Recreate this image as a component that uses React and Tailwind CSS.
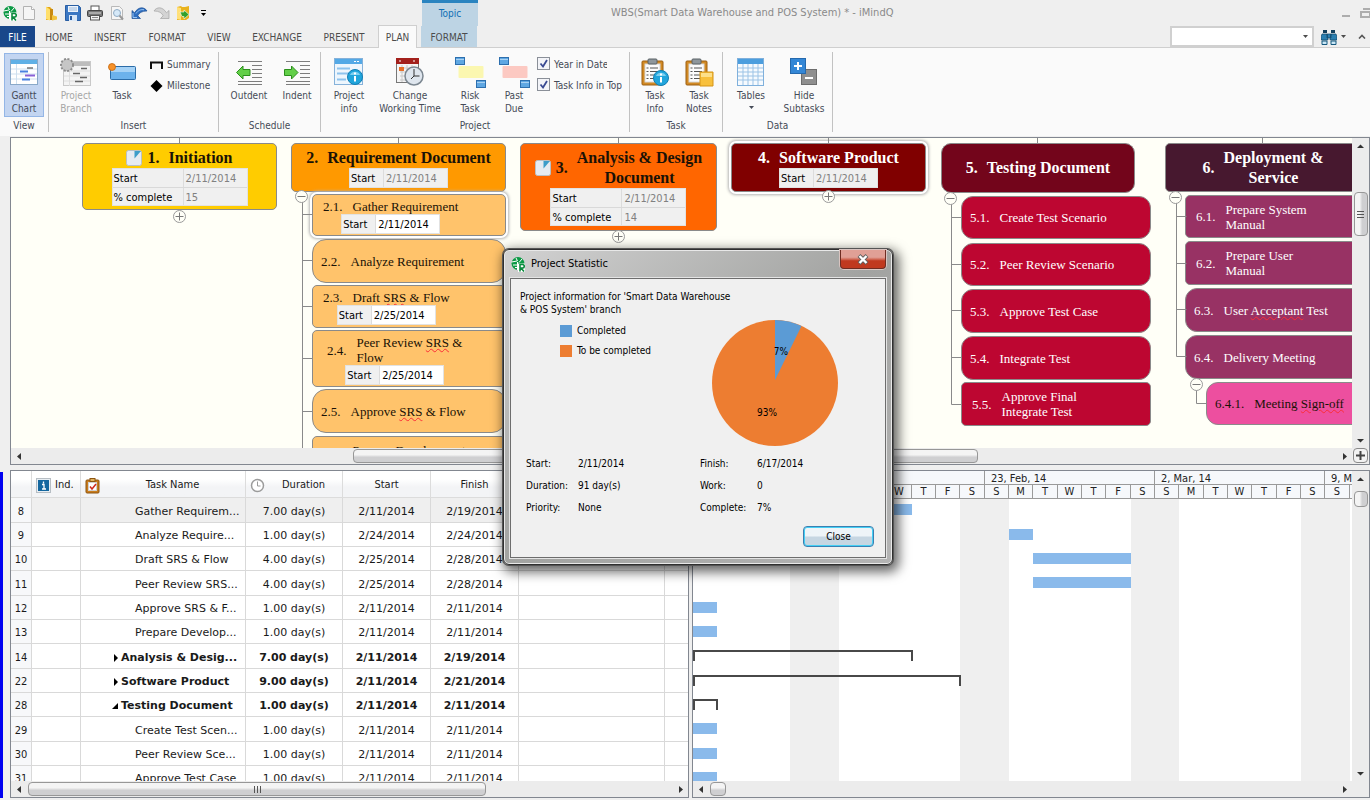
import React from "react";

/* ---------- small drawings ---------- */

const Svg = ({ w, h, children, className = "" }) => (
  <svg width={w} height={h} viewBox={`0 0 ${w} ${h}`} className={`block shrink-0 ${className}`} aria-hidden="true">
    {children}
  </svg>
);

const Logo = () => (
  <Svg w={14} h={16}>
    <circle cx="7" cy="7.500" r="6.500" fill="#0d9a46" />
    <path d="M.5 6 6 5M2 9h4.500M4 11.500h2.500M6.500 5 5 2M8 6.500 11 3M6.500 6v8" stroke="#fff" strokeWidth="1" fill="none" />
    <path d="M7 7.500h7V16H7z" fill="#fff" />
    <path d="M9 15.500V8.500h2.500a1.500 1.500 0 0 1 0 3.500H10l3 3.500" fill="none" stroke="#0b8a3e" strokeWidth="1.600" />
  </Svg>
);
const NewDoc = () => (
  <Svg w={14} h={16}>
    <path d="M1.500 1.500h8l3 3v10h-11z" fill="#f5f5f5" stroke="#b2b2b2" />
    <path d="M9.500 1.500v3h3" fill="#fff" stroke="#b2b2b2" />
  </Svg>
);
const Folder = () => (
  <Svg w={14} h={16}>
    <path d="M2 2h4l3 3v10H2z" fill="#e3a61a" />
    <path d="M6 4h3v11H6z" fill="#c98a10" />
    <path d="M2 1.500l4 3v11L2 14z" fill="#ffdf6b" />
    <path d="M8 10l5 1.500v3L8 15.500z" fill="#f3c33d" />
  </Svg>
);
const Save = () => (
  <Svg w={16} h={16}>
    <path d="M.5.5h13l2 2v13H.5z" fill="#3c78c3" stroke="#2a5ea3" />
    <rect x="3" y="1" width="10" height="6" fill="#eef4fb" />
    <path d="M4 3h8M4 5h8" stroke="#9bb9dc" />
    <rect x="4" y="10" width="8" height="6" fill="#dbe8f7" />
    <rect x="5" y="11" width="2" height="4" fill="#2a5ea3" />
  </Svg>
);
const Printer = () => (
  <Svg w={16} h={16}>
    <rect x="4" y="1" width="8" height="5" fill="#fff" stroke="#555" />
    <rect x=".5" y="5.500" width="15" height="6" rx="1" fill="#777" stroke="#444" />
    <path d="M2 8h12" stroke="#ddd" />
    <rect x="3.500" y="10.500" width="9" height="4.500" fill="#f2f2f2" stroke="#555" />
    <path d="M5 12.500h6" stroke="#888" />
  </Svg>
);
const Preview = () => (
  <Svg w={14} h={16}>
    <path d="M1.500 1.500h8l3 3v10h-11z" fill="#f6f6f6" stroke="#b9b9b9" />
    <circle cx="7" cy="8" r="3.500" fill="#d6e9f8" stroke="#8fabc4" />
    <path d="M9.500 10.500l3.500 4" stroke="#999" strokeWidth="2" />
  </Svg>
);
const Undo = () => (
  <Svg w={17} h={14}>
    <path d="M1 4.500V12.500h8.500L6.800 9.800C8 6.800 11 5 16 5 13.500.8 7.500.2 3.500 6.800z" fill="#2f6fc0" stroke="#1d4f93" strokeWidth=".7" />
    <path d="M2 7v4.500h4M5 7.500C7 4.500 10 3 13 3.800" fill="none" stroke="#9cc6f3" />
  </Svg>
);
const Redo = () => (
  <Svg w={17} h={14}>
    <path d="M16 4.500V12.500H7.500l2.700-2.700C9 6.800 6 5 1 5 3.500.8 9.500.2 13.500 6.800z" fill="#d4d4d4" stroke="#a3a3a3" strokeWidth=".7" />
  </Svg>
);
const OpenMap = () => (
  <Svg w={14} h={16}>
    <path d="M1 2l4-1 1 1h3l4-1v12l-3 2H1z" fill="#e9b21c" />
    <path d="M1 2l4 1v12l-4-1z" fill="#ffe07a" />
    <path d="M4 7h4V5l5 4.500L8 14v-2.500H6z" fill="#33a02c" stroke="#fff" strokeWidth=".6" />
  </Svg>
);
const Caret = ({ className = "" }) => (
  <Svg w={5} h={3} className={className}>
    <path d="M0 0h5L2.500 3z" fill="currentColor" />
  </Svg>
);

const GanttIcon = () => (
  <Svg w={28} h={26}>
    <rect x=".5" y=".5" width="27" height="25" fill="#fff" stroke="#8aa9c9" />
    <rect x="1" y="1" width="26" height="4" fill="#5fb0e6" />
    <path d="M1 10h26M1 15h26M1 20h26M6.500 5v20" stroke="#cfe0ef" />
    <path d="M17 9h6" stroke="#333" strokeWidth="1" />
    <path d="M10 12.500h8M12 20.500h8" stroke="#4b82e0" strokeWidth="2" />
    <path d="M15 16.500h10" stroke="#8a62d6" strokeWidth="2" />
  </Svg>
);
const BranchIcon = () => (
  <Svg w={32} h={30}>
    <g transform="translate(3 4)">
      <rect x=".5" y=".5" width="27" height="24" fill="#f4f4f4" stroke="#c9c9c9" />
      <rect x="1" y="1" width="26" height="4" fill="#bdbdbd" />
      <path d="M1 10h26M1 15h26M1 20h26M6.500 5v20" stroke="#dedede" />
      <path d="M18 7.500h6M10 12.500h7M12 20.500h8M17 16.500h7" stroke="#666" strokeWidth="1.500" />
    </g>
    <circle cx="7" cy="8" r="6" fill="#bcbcbc" stroke="#8d8d8d" strokeWidth="2" strokeDasharray="2 1.500" />
    <circle cx="7" cy="8" r="5" fill="#c6c6c6" />
  </Svg>
);
const TaskIcon = () => (
  <Svg w={28} h={18}>
    <rect x="2.500" y="3.500" width="25" height="13" rx="1" fill="#6cb2ec" stroke="#2b6ca8" />
    <rect x="3" y="4" width="24" height="5" fill="#a5d2f6" />
    <circle cx="4" cy="4" r="3.500" fill="#f7922a" stroke="#c4640b" strokeWidth=".8" />
  </Svg>
);
const DentIcon = ({ out }) => (
  <Svg w={27} h={27}>
    <path d="M2 2.500h24M16 6.500h10M16 10.500h10M16 14.500h10M16 18.500h10M2 22.500h24M2 25.500h24" stroke="#7d7d7d" />
    {out ? (
      <path d="M.5 13.500 7 7v3.500h7v6H7V20z" fill="#62cf48" stroke="#2c8f1c" />
    ) : (
      <path d="M14 13.500 7.500 7v3.500h-7v6h7V20z" fill="#62cf48" stroke="#2c8f1c" />
    )}
  </Svg>
);
const InfoDot = ({ x, y, r }) => (
  <g>
    <circle cx={x} cy={y} r={r} fill="#21a5dc" stroke="#117fb4" />
    <path d={`M${x - 5} ${y - 2}a5.500 5.500 0 0 1 10 0`} fill="#7fd0f0" />
    <path d={`M${x} ${y - 4.5}v2M${x} ${y - 1}v5.500`} stroke="#fff" strokeWidth="2" />
  </g>
);
const ProjectInfoIcon = () => (
  <Svg w={30} h={28}>
    <rect x=".5" y=".5" width="28" height="26" fill="#eef6fd" stroke="#86b2da" />
    <rect x="1" y="1" width="27" height="5" fill="#54a9e6" />
    <path d="M20 3.500h2M23 3.500h2" stroke="#fff" />
    <path d="M3 10.500h13M3 15.500h12M3 21.500h9" stroke="#8ec3ee" strokeWidth="2" />
    <InfoDot x={21} y={19} r={7.5} />
  </Svg>
);
const WorkingTimeIcon = () => (
  <Svg w={28} h={28}>
    <rect x=".5" y=".5" width="22" height="24" fill="#f5f5f5" stroke="#777" />
    <rect x="0" y="0" width="23" height="6" fill="#a3201c" />
    <path d="M4 2v2M18 2v2" stroke="#fff" />
    <path d="M4 10h14M4 14h14M4 18h14M4 22h14M6 7v17M11 7v17M16 7v17" stroke="#c9c9c9" />
    <rect x="3" y="9" width="5" height="4" fill="#e8702a" />
    <circle cx="18" cy="18" r="9" fill="#dfe6ee" stroke="#7c8791" strokeWidth="1.500" />
    <path d="M18 11v7h5.500M18 18l-3 3" stroke="#333" fill="none" />
  </Svg>
);
const PairIcon = ({ fill }) => (
  <Svg w={32} h={32}>
    <rect x="1.500" y="1.500" width="9" height="7" fill="#5fa7e2" stroke="#2d6fae" />
    <rect x="4.500" y="10" width="25" height="12" rx="1" fill={fill} />
    <rect x="22.500" y="24.500" width="9" height="7" fill="#5fa7e2" stroke="#2d6fae" />
    <path d="M2 3.500h8M23 26.500h8" stroke="#a9d1f2" />
  </Svg>
);
const Clipboard = ({ children }) => (
  <Svg w={29} h={29}>
    <rect x="1" y="3" width="21" height="24" rx="1" fill="#d28a24" stroke="#9c5f10" />
    <rect x="4" y="6" width="15" height="18" fill="#fcfcfc" stroke="#d8d8d8" />
    <rect x="7" y="1" width="9" height="5" rx="1" fill="#8f979c" stroke="#5b6266" />
    <path d="M5.500 10h2M9 10h8M5.500 13.500h2M9 13.500h8M5.500 17h2M9 17h8M5.500 20.500h2M9 20.500h6" stroke="#555" />
    {children}
  </Svg>
);
const TablesIcon = () => (
  <Svg w={28} h={28}>
    <rect x=".5" y=".5" width="26" height="27" fill="#f6fafe" stroke="#7fb0dc" />
    <rect x="1" y="1" width="25" height="5" fill="#4c9ede" />
    <path d="M1 10h25M1 14h25M1 18h25M1 22h25M6 6v21M11 6v21M16 6v21M21 6v21" stroke="#9cc3e6" />
  </Svg>
);
const HideIcon = () => (
  <Svg w={28} h={28}>
    <rect x="11.500" y="11.500" width="15" height="15" fill="#8f8f8f" stroke="#6d6d6d" />
    <rect x=".5" y=".5" width="15" height="15" fill="#3487d6" stroke="#2569ad" />
    <path d="M8 4v8M4 8h8" stroke="#fff" strokeWidth="2" />
    <path d="M15 20h8" stroke="#fff" strokeWidth="2" />
  </Svg>
);
const Binoculars = () => (
  <Svg w={16} h={16}>
    <path d="M2 1h4v3H2zM10 1h4v3h-4z" fill="#123f5c" />
    <path d="M1 5h5l1 5v1H0V8zM10 5h5l1 3v3H9v-1zM6 5h4v4H6z" fill="#2b7fb0" stroke="#0f4667" strokeWidth=".7" />
    <path d="M1 12h5v3.500H1zM10 12h5v3.500h-5z" fill="#c9e6f5" stroke="#15587f" />
  </Svg>
);

/* ---------- title bar, tabs ---------- */

const quick = [
  ["New", NewDoc],
  ["Open", Folder],
  ["Save", Save],
  ["Print", Printer],
  ["Preview", Preview],
  ["Undo", Undo],
  ["Redo", Redo],
  ["Open map", OpenMap],
];

const tabs = [
  ["HOME", "w-12"],
  ["INSERT", "w-[54px]"],
  ["FORMAT", "w-[60px]"],
  ["VIEW", "w-[44px]"],
  ["EXCHANGE", "w-[72px]"],
  ["PRESENT", "w-[62px]"],
];

function Header() {
  return (
    <header className="shrink-0 bg-[#efefef] text-[#4c4c4c]">
      <div className="flex h-[26px]">
        <div className="flex w-[422px] shrink-0 items-center">
          <span className="flex w-[18px] justify-end pr-px"><Logo /></span>
          {quick.map(([name, Icon]) => (
            <button key={name} aria-label={name} className="flex w-[22px] justify-center"><Icon /></button>
          ))}
          <button aria-label="Customize" className="flex w-3 flex-col items-end gap-0.5 text-black">
            <span className="h-px w-[5px] bg-black" />
            <Caret />
          </button>
        </div>
        <div className="w-14 shrink-0 border-t-[3px] border-[#2a84c0] bg-[#bdd4e4] pt-[3px] text-center leading-[15px] text-[#0f6fb5]">Topic</div>
        <h1 className="min-w-0 flex-1 truncate pl-[133px] text-[11px] leading-[26px] text-[#8a8a8a]">
          WBS(Smart Data Warehouse and POS System) * - iMindQ
        </h1>
        <div className="flex shrink-0 items-center gap-2.5 overflow-hidden text-[#adadad]">
          <button aria-label="Minimize" className="mt-1.5 h-0.5 w-2 bg-[#adadad]" />
          <button aria-label="Restore" className="-mr-0.5">
            <Svg w={12} h={10}>
              <path d="M3 1h9v6M1 4h9v5H1z" fill="none" stroke="#adadad" strokeWidth="2" />
            </Svg>
          </button>
        </div>
      </div>
      <nav className="flex h-[22px] items-stretch border-b border-[#cfcfcf]">
        <button className="w-[35px] bg-[#19478a] pt-0.5 text-white">FILE</button>
        {tabs.map(([t, w]) => (
          <button key={t} className={`pt-0.5 ${w}`}>{t}</button>
        ))}
        <button className="z-10 -mt-px -mb-px ml-[3px] mr-1 w-[39px] border border-b-0 border-[#cfcfcf] bg-[#fafafa] pt-px">PLAN</button>
        <button className="w-14 bg-[#bdd4e4] pt-0.5">FORMAT</button>
        <div className="ml-auto flex items-center pr-1">
          <label className="flex h-[21px] w-36 items-center border-2 border-[#d0d0d0] bg-white pr-1">
            <input aria-label="Search" className="min-w-0 flex-1 bg-transparent px-1 outline-none" />
            <Caret />
          </label>
          <button aria-label="Find" className="ml-[7px] flex items-center gap-1"><Binoculars /><Caret /></button>
          <button aria-label="Collapse ribbon" className="ml-3">
            <Svg w={8} h={5}><path d="M1 4.500 4 1.500l3 3" fill="none" stroke="#555" strokeWidth="1.600" /></Svg>
          </button>
        </div>
      </nav>
    </header>
  );
}

/* ---------- ribbon ---------- */

const Big = ({ icon, a, b, w, className = "", caret }) => (
  <button className={`flex h-16 shrink-0 flex-col items-center leading-[13px] ${w} ${className}`}>
    <span className="flex h-9 items-center pt-0.5">{icon}</span>
    <span>{a}</span>
    {caret ? <Caret className="mt-1" /> : <span>{b}</span>}
  </button>
);

const Group = ({ label, w, children }) => (
  <section className={`my-1 flex shrink-0 flex-col border-r border-[#c2c2c2] ${w}`}>
    <div className="flex pt-px">{children}</div>
    <h2 className="mt-auto text-center leading-[13px]">{label}</h2>
  </section>
);

const Check = ({ children, max }) => (
  <label className={`flex h-[21px] items-center gap-1 overflow-hidden whitespace-nowrap ${max}`}>
    <input type="checkbox" defaultChecked className="peer sr-only" />
    <span className="flex h-[13px] w-[13px] shrink-0 items-center justify-center border border-[#8a8f98] bg-[#f3f4f8]">
      <Svg w={9} h={9}><path d="M1.500 4.500 4 7.500 8 1" fill="none" stroke="#3a4a92" strokeWidth="1.800" /></Svg>
    </span>
    <span className="pt-0.5">{children}</span>
  </label>
);

function Ribbon() {
  return (
    <div className="flex h-[88px] shrink-0 bg-[#fafafa] text-[#454b57]">
      <Group label="View" w="w-[49px]">
        <Big w="w-10" className="ml-1 bg-[#c3d5f1] outline outline-1 -outline-offset-1 outline-[#94b6e6]" icon={<GanttIcon />} a="Gantt" b="Chart" />
      </Group>
      <Group label="Insert" w="w-[170px]">
        <Big w="w-11" className="ml-[5px] text-[#a6a6a6]" icon={<BranchIcon />} a="Project" b="Branch" />
        <Big w="w-12" icon={<TaskIcon />} a="Task" />
        <div className="ml-1 flex flex-col pt-px">
          <button className="flex h-[21px] items-center gap-1">
            <Svg w={13} h={8}><path d="M1 8V1.500h11V8" fill="none" stroke="#111" strokeWidth="2" /></Svg>
            Summary
          </button>
          <button className="flex h-[21px] items-center gap-1">
            <Svg w={13} h={12}><path d="M6.500 0 12.500 6l-6 6L.5 6z" fill="#000" /></Svg>
            Milestone
          </button>
        </div>
      </Group>
      <Group label="Schedule" w="w-[102px]">
        <Big w="w-12" className="ml-1.5" icon={<DentIcon out />} a="Outdent" />
        <Big w="w-12" icon={<DentIcon />} a="Indent" />
      </Group>
      <Group label="Project" w="w-[309px]">
        <Big w="w-[50px]" className="ml-[3px]" icon={<ProjectInfoIcon />} a="Project" b="info" />
        <Big w="w-[72px]" icon={<WorkingTimeIcon />} a="Change" b="Working Time" />
        <Big w="w-12" icon={<PairIcon fill="#fbf7b0" />} a="Risk" b="Task" />
        <Big w="w-10" icon={<PairIcon fill="#fcc9c2" />} a="Past" b="Due" />
        <div className="ml-[3px] flex flex-col">
          <Check max="max-w-[70px]">Year in Date</Check>
          <Check max="max-w-[88px]">Task Info in Top</Check>
        </div>
      </Group>
      <Group label="Task" w="w-[93px]">
        <Big w="w-11" className="ml-[3px]" icon={<Clipboard><InfoDot x={20} y={20} r={7.5} /></Clipboard>} a="Task" b="Info" />
        <Big w="w-11" icon={<Clipboard><path d="M15 14h13v14H15z" fill="#f8c03c" stroke="#d59416" /><path d="M16 15h11v4H16z" fill="#fde08a" /></Clipboard>} a="Task" b="Notes" />
      </Group>
      <Group label="Data" w="w-[110px]">
        <Big w="w-[54px]" className="ml-px" icon={<TablesIcon />} a="Tables" caret />
        <Big w="w-[52px]" icon={<HideIcon />} a="Hide" b="Subtasks" />
      </Group>
    </div>
  );
}

/* ---------- scroll bars ---------- */

const Arrow = ({ dir }) => {
  const d = { left: "M6 1v7L2 4.500z", right: "M3 1v7l4-3.500z", up: "M1 6h7L4.500 2.500z", down: "M1 3h7L4.500 6.500z" }[dir];
  return (
    <button aria-label={`Scroll ${dir}`} className="flex h-4 w-4 shrink-0 items-center justify-center">
      <Svg w={9} h={9}><path d={d} fill="#333" /></Svg>
    </button>
  );
};
const Grip = ({ upright }) => (
  <span className={`flex gap-0.5 ${upright ? "flex-col" : ""}`}>
    {[0, 1, 2].map((i) => (
      <span key={i} className={upright ? "h-px w-[7px] bg-[#555]" : "h-[7px] w-px bg-[#555]"} />
    ))}
  </span>
);
const HBar = ({ thumb, grip }) => (
  <div className="flex h-4 min-w-0 flex-1 items-center bg-[#ececec]">
    <Arrow dir="left" />
    <div className="flex min-w-0 flex-1">
      <div className={`flex h-[14px] items-center justify-center rounded-sm border border-[#979797] bg-linear-to-b from-[#f4f4f4] from-40% to-[#cfcfd1] to-60% ${thumb}`}>{grip && <Grip />}</div>
    </div>
    <Arrow dir="right" />
  </div>
);
const VBar = ({ thumb, grip }) => (
  <div className="flex min-h-0 w-[17px] flex-1 flex-col items-center bg-[#ececec]">
    <Arrow dir="up" />
    <div className="flex min-h-0 w-full flex-1 flex-col items-center">
      <div className={`flex w-[14px] items-center justify-center rounded-sm border border-[#979797] bg-linear-to-r from-[#f4f4f4] from-40% to-[#cfcfd1] to-60% ${thumb}`}>{grip && <Grip upright />}</div>
    </div>
    <Arrow dir="down" />
  </div>
);

/* ---------- mind map ---------- */

const PieMark = () => (
  <Svg w={16} h={16}>
    <rect x=".5" y=".5" width="15" height="15" rx="2" fill="#e6ebf1" stroke="#b9c0c6" />
    <path d="M8.500 1H15L8.500 8.500z" fill="#3d9dc9" />
  </Svg>
);

const Fields = ({ rows, dim }) => (
  <dl className="border border-[#e2e2e2] bg-[#f0f0f0] [font-family:'DejaVu_Sans_Condensed','DejaVu_Sans',sans-serif] text-[11px] font-normal">
    {rows.map(([k, v], i) => (
      <div key={k} className={`flex h-[18px] leading-[19px] ${i ? "border-t border-[#d9d9d9]" : ""}`}>
        <dt className={`border-r border-[#dcdcdc] pl-px text-black ${rows.length > 1 ? "w-[71px]" : "w-[34px]"}`}>{k}</dt>
        <dd className={`w-[63px] pl-0.5 ${dim ? "text-[#808080]" : "bg-white text-black"}`}>{v}</dd>
      </div>
    ))}
  </dl>
);

const Bad = ({ children }) => (
  <span className="underline decoration-red-500 decoration-wavy decoration-1 underline-offset-1">{children}</span>
);

const start = (d) => [["Start", d]];
const main = "text-[16px] font-bold leading-5";
const frame = "shadow-[0_0_0_2px_#fff,0_0_3px_3px_#b4b4b4]";

const nodes = [
  { box: "left-[71px] top-[5px] h-[67px] w-[195px]", look: "rounded-[5px] bg-[#ffcc00] text-[#1a1206]", main: 1, n: "1.", icon: 1, text: "Initiation", f: [["Start", "2/11/2014"], ["% complete", "15"]] },
  { box: "left-[280px] top-[5px] h-[49px] w-[215px]", look: "rounded-[5px] bg-[#ff9900] text-[#1a1206]", main: 1, n: "2.", text: "Requirement Document", f: start("2/11/2014") },
  { box: "left-[509px] top-[5px] h-[88px] w-[197px]", look: "rounded-[5px] bg-[#ff6600] text-[#1a1206]", main: 1, n: "3.", icon: 1, text: <>Analysis &amp; Design<br />Document</>, f: [["Start", "2/11/2014"], ["% complete", "14"]] },
  { box: "left-[720px] top-[5px] h-[49px] w-[195px]", look: `rounded-[5px] bg-[#800000] text-white ${frame}`, main: 1, n: "4.", text: "Software Product", f: start("2/11/2014") },
  { box: "left-[930px] top-[5px] h-[50px] w-[194px]", look: "rounded-[10px] bg-[#73051b] text-white", main: 1, n: "5.", text: "Testing Document" },
  { box: "left-[1154px] top-[5px] h-[49px] w-[196px]", look: "rounded-[5px] bg-[#47182f] text-white", main: 1, n: "6.", text: <>Deployment &amp;<br />Service</> },

  { box: "left-[301px] top-[56px] h-[42px] w-[194px]", look: `rounded-[5px] bg-[#ffc36b] pl-2.5 text-[#1a1206] ${frame}`, n: "2.1.", text: "Gather Requirement", f: start("2/11/2014") },
  { box: "left-[301px] top-[101px] h-[44px] w-[194px]", look: "rounded-[14px] bg-[#ffc36b] pl-2 text-[#1a1206]", n: "2.2.", text: "Analyze Requirement" },
  { box: "left-[301px] top-[147px] h-[43px] w-[194px]", look: "rounded-[5px] bg-[#ffc36b] pl-2.5 text-[#1a1206]", n: "2.3.", text: <>Draft <Bad>SRS</Bad> &amp; Flow</>, f: start("2/25/2014") },
  { box: "left-[301px] top-[192px] h-[57px] w-[194px]", look: "rounded-[5px] bg-[#ffc36b] pl-3.5 text-[#1a1206]", n: "2.4.", text: <>Peer Review <Bad>SRS</Bad> &amp;<br />Flow</>, f: start("2/25/2014") },
  { box: "left-[301px] top-[251px] h-[44px] w-[194px]", look: "rounded-[14px] bg-[#ffc36b] pl-2 text-[#1a1206]", n: "2.5.", text: <>Approve <Bad>SRS</Bad> &amp; Flow</> },
  { box: "left-[301px] top-[298px] h-[44px] w-[194px]", look: "rounded-[5px] bg-[#ffc36b] pl-2.5 text-[#1a1206]", n: "2.6.", text: <>Prepare Development<br />Plan</> },

  { box: "left-[950px] top-[58px] h-[43px] w-[190px]", look: "rounded-[12px] bg-[#bd0631] pl-2 text-white", n: "5.1.", text: "Create Test Scenario" },
  { box: "left-[950px] top-[105px] h-[43px] w-[190px]", look: "rounded-[12px] bg-[#bd0631] pl-2 text-white", n: "5.2.", text: "Peer Review Scenario" },
  { box: "left-[950px] top-[151px] h-[44px] w-[190px]", look: "rounded-[12px] bg-[#bd0631] pl-2 text-white", n: "5.3.", text: "Approve Test Case" },
  { box: "left-[950px] top-[198px] h-[44px] w-[190px]", look: "rounded-[12px] bg-[#bd0631] pl-2 text-white", n: "5.4.", text: "Integrate Test" },
  { box: "left-[950px] top-[244px] h-[44px] w-[190px]", look: "rounded-[5px] bg-[#bd0631] pl-2.5 text-white", n: "5.5.", text: <>Approve Final<br />Integrate Test</> },

  { box: "left-[1174px] top-[57px] h-[43px] w-[190px]", look: "rounded-[5px] bg-[#983264] pl-2.5 text-white", n: "6.1.", text: <>Prepare System<br />Manual</> },
  { box: "left-[1174px] top-[103px] h-[44px] w-[190px]", look: "rounded-[5px] bg-[#983264] pl-2.5 text-white", n: "6.2.", text: <>Prepare User<br />Manual</> },
  { box: "left-[1174px] top-[150px] h-[44px] w-[190px]", look: "rounded-[12px] bg-[#983264] pl-2 text-white", n: "6.3.", text: <>User <Bad>Acceptant</Bad> Test</> },
  { box: "left-[1174px] top-[197px] h-[44px] w-[190px]", look: "rounded-[12px] bg-[#983264] pl-2 text-white", n: "6.4.", text: "Delivery Meeting" },
  { box: "left-[1195px] top-[244px] h-[43px] w-[190px]", look: "rounded-[12px] bg-[#ed4f9f] pl-2 text-[#1a1206]", n: "6.4.1.", text: <>Meeting <Bad>Sign-off</Bad></> },
];

const Node = ({ box, look, main: big, n, icon, text, f }) => (
  <div className={`absolute flex flex-col border border-[#8a8a8a] ${f ? "pt-1" : "justify-center"} ${big ? `items-center ${main}` : "items-start text-[13px] leading-[15px]"} ${box} ${look}`}>
    <div className="flex flex-col items-center whitespace-nowrap">
      <div className={`flex items-center ${big ? "gap-[9px]" : "gap-2.5"}`}>
        <span className="flex items-center gap-[5px]">{icon && <PieMark />}{n}</span>
        <span className={big ? "text-center" : ""}>{text}</span>
      </div>
      {f && <Fields rows={f} dim={big} />}
    </div>
  </div>
);

const toggles = [[168, 78, 1], [607, 98, 1], [817, 58, 1], [290, 58, 0], [939, 60, 0], [1164, 59, 0], [1185, 246, 0]];

const Links = () => (
  <svg width="1341" height="310" viewBox="0 0 1341 310" className="absolute top-0 left-0" aria-hidden="true">
    <g fill="none" stroke="#8a8a8a">
      <path d="M168.500 0v5M387.500 0v5M607.500 0v5M817.500 0v5M1026.500 0v5M1251.500 0v5" />
      <path d="M291.500 64v246M291.500 76.500h10M291.500 122.500h10M291.500 168.500h10M291.500 220.500h10M291.500 273.500h10" />
      <path d="M940.500 66v200.500h10M940.500 79.500h10M940.500 126.500h10M940.500 172.500h10M940.500 219.500h10" />
      <path d="M1165.500 65v153.500h10M1165.500 78.500h10M1165.500 125.500h10M1165.500 171.500h10M1185.500 252v13.500h10" />
    </g>
    {toggles.map(([x, y, plus]) => (
      <g key={`${x}-${y}`} stroke="#7a7a7a">
        <circle cx={x + 0.5} cy={y + 0.5} r="6" fill="#fffff7" stroke="#9a9a9a" />
        <path d={plus ? `M${x - 3.5} ${y + 0.5}h8M${x + 0.5} ${y - 3.5}v8` : `M${x - 3.5} ${y + 0.5}h8`} />
      </g>
    ))}
  </svg>
);

function MapPanel() {
  return (
    <div className="ml-2.5 flex h-[328px] shrink-0 flex-col border border-[#828790]">
      <div className="flex min-h-0 flex-1">
        <div className="relative min-w-0 flex-1 overflow-hidden bg-[#fffff7] [font-family:'Liberation_Serif',serif]">
          {nodes.map((p) => <Node key={p.n} {...p} />)}
          <Links />
        </div>
        <div className="flex"><VBar thumb="mt-[38px] h-11" grip /></div>
      </div>
      <div className="flex h-4 shrink-0">
        <HBar thumb="ml-[326px] w-[625px]" />
        <button aria-label="Zoom" className="mx-px flex h-[15px] w-[15px] items-center justify-center rounded-sm border border-[#8a8a8a] bg-[#f2f2f2]">
          <Svg w={9} h={9}><path d="M4.500 0v9M0 4.500h9" stroke="#444" strokeWidth="2" /></Svg>
        </button>
      </div>
    </div>
  );
}

/* ---------- task table and time line ---------- */

const tasks = [
  { id: 8, name: "Gather Requirem...", dur: "7.00", s: "2/11/2014", e: "2/19/2014", from: 0, to: 9, sel: 1 },
  { id: 9, name: "Analyze Require...", dur: "1.00", s: "2/24/2014", e: "2/24/2014", from: 13, to: 14 },
  { id: 10, name: "Draft SRS & Flow", dur: "4.00", s: "2/25/2014", e: "2/28/2014", from: 14, to: 18 },
  { id: 11, name: "Peer Review SRS...", dur: "4.00", s: "2/25/2014", e: "2/28/2014", from: 14, to: 18 },
  { id: 12, name: "Approve SRS & F...", dur: "1.00", s: "2/11/2014", e: "2/11/2014", from: 0, to: 1 },
  { id: 13, name: "Prepare Develop...", dur: "1.00", s: "2/11/2014", e: "2/11/2014", from: 0, to: 1 },
  { id: 14, name: "Analysis & Desig...", dur: "7.00", s: "2/11/2014", e: "2/19/2014", from: 0, to: 9, sum: "closed" },
  { id: 22, name: "Software Product", dur: "9.00", s: "2/11/2014", e: "2/21/2014", from: 0, to: 11, sum: "closed" },
  { id: 28, name: "Testing Document", dur: "1.00", s: "2/11/2014", e: "2/11/2014", from: 0, to: 1, sum: "open" },
  { id: 29, name: "Create Test Scen...", dur: "1.00", s: "2/11/2014", e: "2/11/2014", from: 0, to: 1 },
  { id: 30, name: "Peer Review Sce...", dur: "1.00", s: "2/11/2014", e: "2/11/2014", from: 0, to: 1 },
  { id: 31, name: "Approve Test Case", dur: "1.00", s: "2/11/2014", e: "2/11/2014", from: 0, to: 1 },
];

const head = "border-r border-b border-[#dcdcdc] pt-[3px] font-normal";
const cell = "border-r border-b border-[#d9d9d9] pt-[3px]";

function TaskTable() {
  return (
    <div className="flex w-[679px] shrink-0 flex-col border border-[#828790] bg-white">
      <div className="min-h-0 flex-1 overflow-hidden">
        <table className="w-full table-fixed border-separate border-spacing-0 text-[#1a1a1a]">
          <colgroup>
            <col className="w-[21px]" /><col className="w-[49px]" /><col className="w-[165px]" /><col className="w-[97px]" />
            <col className="w-[88px]" /><col className="w-[88px]" /><col className="w-[146px]" /><col />
          </colgroup>
          <thead>
            <tr className="h-[27px] bg-linear-to-b from-white from-30% to-[#f3f4f6] to-60% text-[11px]">
              <th className={head} />
              <th className={head}>
                <span className="flex items-center gap-1 pl-1">
                  <Svg w={15} h={15}>
                    <rect x=".5" y=".5" width="14" height="14" fill="#e8eef3" stroke="#b7bec4" />
                    <rect x="2" y="2" width="11" height="11" fill="#14679f" />
                    <path d="M7.500 3.500v2M6 6.500h2v4M6 11h4" stroke="#fff" fill="none" strokeWidth="1.300" />
                  </Svg>
                  Ind.
                </span>
              </th>
              <th className={head}>
                <span className="flex items-center pl-1">
                  <Svg w={15} h={16}>
                    <rect x="1" y="2" width="13" height="13" rx="1" fill="#c97d1d" stroke="#8d5510" />
                    <rect x="3.500" y="4.500" width="8" height="8" fill="#fff" stroke="#d0d0d0" />
                    <rect x="5" y=".5" width="5" height="3" fill="#e0b25e" stroke="#8d5510" />
                    <path d="M5 8.500 7 11l4-5" fill="none" stroke="#cf2a1d" strokeWidth="1.500" />
                  </Svg>
                  <span className="flex-1 text-center">Task Name</span>
                </span>
              </th>
              <th className={head}>
                <span className="flex items-center pl-1">
                  <Svg w={15} h={15}>
                    <circle cx="7.500" cy="7.500" r="6" fill="#fff" stroke="#9b9b9b" strokeWidth="1.500" />
                    <path d="M7.500 3.500v4.500h3" stroke="#9b9b9b" fill="none" />
                  </Svg>
                  <span className="flex-1 text-center">Duration</span>
                </span>
              </th>
              <th className={head}>Start</th>
              <th className={head}>Finish</th>
              <th className={head} />
              <th className="border-b border-[#dcdcdc]" />
            </tr>
          </thead>
          <tbody className="[font-family:'DejaVu_Sans',sans-serif] text-[11px] leading-4">
            {tasks.map((t) => (
              <tr key={t.id} className={`h-6 text-center [&:nth-child(3n+1)]:h-[25px] ${t.sum ? "font-bold" : ""} ${t.sel ? "bg-[#efefef]" : ""}`}>
                <th scope="row" className={`${cell} bg-[#f7f8fa] [font-family:'DejaVu_Sans_Condensed','DejaVu_Sans',sans-serif] font-normal`}>{t.id}</th>
                <td className={cell} />
                <td className={`${cell} overflow-hidden text-left whitespace-nowrap`}>
                  {t.sum ? (
                    <span className="flex items-center gap-0.5 pl-[31px]">
                      <Svg w={7} h={8}><path d={t.sum === "open" ? "M0 7h6V1z" : "M2 0v8l4-4z"} fill="#000" /></Svg>
                      {t.name}
                    </span>
                  ) : (
                    <span className="pl-[54px]">{t.name}</span>
                  )}
                </td>
                <td className={cell}>{t.dur} day(s)</td>
                <td className={cell}>{t.s}</td>
                <td className={cell}>{t.e}</td>
                <td className={cell} />
                <td className="border-b border-[#d9d9d9]" />
              </tr>
            ))}
          </tbody>
        </table>
      </div>
      <div className="flex shrink-0"><HBar thumb="ml-px w-[458px]" grip /></div>
    </div>
  );
}

/* A day is 24 px wide, every third one 25 px. */
const dayX = (n) => n * 24 + Math.floor(n / 3);
const letters = Array.from({ length: 28 }, (_, i) => "TWTFSSM"[i % 7]);
const weeks = [["", 0, 5], ["16, Feb, 14", 5, 12], ["23, Feb, 14", 12, 19], ["2, Mar, 14", 19, 26], ["9, Mar, 14", 26, 33]];
const dayW = "w-6 shrink-0 [&:nth-child(3n)]:w-[25px]";

function Timeline() {
  return (
    <div className="flex min-w-0 flex-1 flex-col border border-[#828790] bg-white">
      <div className="flex min-h-0 flex-1">
        <div className="flex min-w-0 flex-1 flex-col overflow-hidden">
          <div className="flex h-[13px] shrink-0 bg-[#f6f8fb] text-[11px] leading-[15px] text-[#222]">
            {weeks.map(([label, a, b]) => (
              <div key={a} style={{ width: dayX(b) - dayX(a) }} className="shrink-0 border-r border-[#9a9a9a] pl-1.5 whitespace-nowrap">{label}</div>
            ))}
          </div>
          <div className="flex h-[15px] shrink-0 border-y border-[#9a9a9a] bg-[#f6f8fb] text-center text-[11px] leading-[14px] text-[#222]">
            {letters.map((l, i) => <div key={i} className={`border-r border-[#9a9a9a] ${dayW}`}>{l}</div>)}
          </div>
          <div className="grid min-h-0 flex-1 overflow-hidden">
            <div className="col-start-1 row-start-1 flex">
              {letters.map((l, i) => <div key={i} className={`${dayW} ${l === "S" ? "bg-[#efefef]" : ""}`} />)}
            </div>
            <div className="col-start-1 row-start-1">
              {tasks.map((t) => (
                <div key={t.id} className="h-6 pt-[5px] [&:nth-child(3n+1)]:h-[25px]">
                  <div
                    style={{ marginLeft: dayX(t.from), width: dayX(t.to) - dayX(t.from) + (t.sum ? 1 : 0) }}
                    className={t.sum ? "h-[11px] border-2 border-b-0 border-[#484848]" : "h-[11px] bg-[#8abaeb]"}
                  />
                </div>
              ))}
            </div>
          </div>
        </div>
        <div className="flex"><VBar thumb="mt-1 h-4" /></div>
      </div>
      <div className="flex shrink-0"><HBar thumb="ml-px w-4" /><span className="w-[17px] bg-[#ececec]" /></div>
    </div>
  );
}

/* ---------- dialog ---------- */

function Dialog() {
  return (
    <div role="dialog" aria-label="Project Statistic" className="absolute top-[249px] left-[503px] flex w-[390px] flex-col rounded-md border border-[#2f2f2f] bg-linear-to-br from-[#d2d2d2] via-[#a2a3a1] to-[#b4b4b4] px-1.5 pb-1.5 text-black shadow-[0_0_0_1px_#555,3px_4px_12px_3px_rgba(0,0,0,.6),inset_0_0_0_1px_#e8e8e8]">
      <div className="flex h-7 items-start">
        <span className="flex h-full flex-1 items-center gap-1.5 pl-px text-[11px]"><Logo />Project Statistic</span>
        <button aria-label="Close dialog" className="flex h-[19px] w-[46px] items-center justify-center rounded-b border border-t-0 border-[#6e2c22] bg-linear-to-b from-[#e0a096] from-40% to-[#c0391f] to-60% shadow-[0_0_0_1px_#d9c4c0]">
          <Svg w={12} h={11}>
            <path d="M2 1.500 10 9.500M10 1.500 2 9.500" stroke="#60605f" strokeWidth="4" />
            <path d="M2.500 2 9.500 9M9.500 2l-7 7" stroke="#fff" strokeWidth="2.400" />
          </Svg>
        </button>
      </div>
      <div className="flex flex-col border border-[#6d6d6d] bg-[#f0f0f0] px-[9px] pt-[11px] pb-2.5 shadow-[0_0_0_1px_#e4e4e4]">
        <p className="leading-[13px]">Project information for 'Smart Data Warehouse<br />&amp; POS System' branch</p>
        <div className="flex h-[140px] items-start justify-between">
          <ul className="flex flex-col gap-[7px] pt-2 pl-10 leading-[13px]">
            <li className="flex items-center gap-[5px]"><span className="h-3 w-3 bg-[#5b9bd5]" />Completed</li>
            <li className="flex items-center gap-[5px]"><span className="h-3 w-3 bg-[#ed7d31]" />To be completed</li>
          </ul>
          <svg width="128" height="128" viewBox="0 0 128 128" className="mt-[3px] mr-[37px]" role="img" aria-label="Completed 7%, to be completed 93%">
            <circle cx="64" cy="64" r="63" fill="#ed7d31" />
            <path d="M64 61V1a63 63 0 0 1 26.500 6z" fill="#5b9bd5" />
            <text x="70" y="36" textAnchor="middle" fontSize="10">7%</text>
            <text x="56" y="97" textAnchor="middle" fontSize="10">93%</text>
          </svg>
        </div>
        <dl className="grid grid-cols-[52px_122px_57px_auto] gap-y-[7px] pl-1.5 leading-[15px]">
          <dt>Start:</dt><dd>2/11/2014</dd><dt>Finish:</dt><dd>6/17/2014</dd>
          <dt>Duration:</dt><dd>91 day(s)</dd><dt>Work:</dt><dd>0</dd>
          <dt>Priority:</dt><dd>None</dd><dt>Complete:</dt><dd>7%</dd>
        </dl>
        <button className="mt-[11px] mr-0.5 h-[21px] w-[71px] self-end rounded-sm border border-[#3c7fb1] bg-linear-to-b from-[#eef4f8] from-45% to-[#c6d6e2] to-55% leading-[19px] shadow-[inset_0_0_0_1px_#45d0f5]">Close</button>
      </div>
    </div>
  );
}

export default function App() {
  return (
    <div className="relative flex h-screen flex-col overflow-hidden bg-[#efefef] [font-family:'DejaVu_Sans_Condensed','DejaVu_Sans',sans-serif] text-[10px]">
      <Header />
      <Ribbon />
      <main className="flex min-h-0 flex-1 flex-col gap-[5px] pt-px pb-0.5">
        <MapPanel />
        <div className="flex min-h-0 flex-1">
          <div className="mt-0.5 mr-[7px] w-[3px] bg-[#0000f0]" />
          <div className="flex min-w-0 flex-1 gap-[3px]">
            <TaskTable />
            <Timeline />
          </div>
        </div>
      </main>
      <Dialog />
    </div>
  );
}
